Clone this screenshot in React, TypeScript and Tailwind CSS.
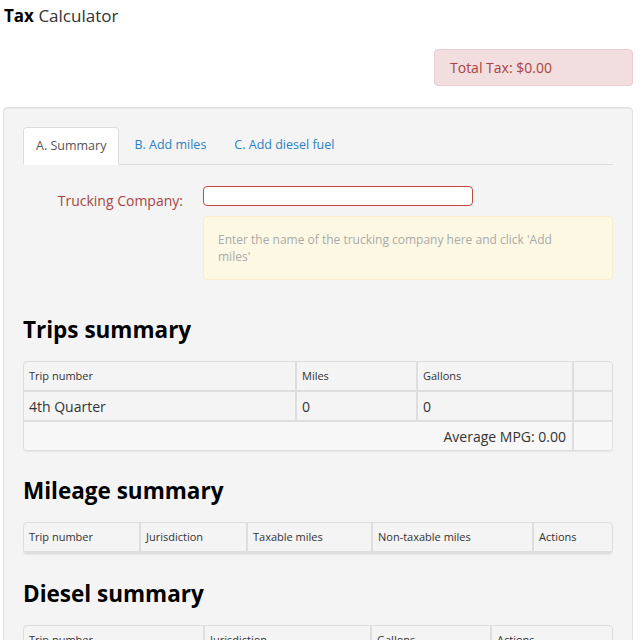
const trips = [{ trip: "4th Quarter", miles: "0", gallons: "0" }];

const HeaderCell = ({ children, last }: { children?: React.ReactNode; last?: boolean }) => (
  <div className={`flex h-[28px] items-center px-[5px] text-[11px] text-[#333] ${last ? "" : "border-r-2 border-[#dedede]"}`}>
    {children}
  </div>
);

const Cell = ({ children, last }: { children?: React.ReactNode; last?: boolean }) => (
  <div className={`flex h-[28px] items-center px-[5px] text-[14px] text-[#333] ${last ? "" : "border-r-2 border-[#dedede]"}`}>
    {children}
  </div>
);

const Heading = ({ children, top }: { children: React.ReactNode; top: string }) => (
  <h2 className={`${top} mb-[18px] text-[22.5px] font-bold leading-[26px] text-black`}>{children}</h2>
);

export default function App() {
  return (
    <div className="min-h-[640px] bg-white font-['Open_Sans',sans-serif] text-[#333]">
      <div className="pl-[4px] pt-[3px] text-[17px] leading-[26px]">
        <span className="font-bold text-black">Tax</span> <span className="text-[#333]">Calculator</span>
      </div>

      <div className="mr-[7px] mt-[20px] flex justify-end">
        <div className="flex h-[37px] w-[199px] items-center rounded-[4px] border border-[#ebccd1] bg-[#f2dede] px-[15px] text-[14px] text-[#a94442]">
          Total Tax: $0.00
        </div>
      </div>

      <div className="ml-[3px] mr-[7px] mt-[21px] rounded-[4px] border border-[#e3e3e3] bg-[#f4f4f4] px-[19px] pb-[20px] pt-[19px] shadow-[inset_0_1px_1px_rgba(0,0,0,0.05)]">
        {/* tabs */}
        <div className="flex border-b border-[#ddd] text-[12.5px]">
          <div className="-mb-px flex h-[38px] items-center rounded-t-[4px] border border-[#ddd] border-b-transparent bg-white px-[12px] text-[#555]">
            A. Summary
          </div>
          <div className="ml-[2px] flex h-[37px] items-center px-[13px] text-[#2a80c4]">B. Add miles</div>
          <div className="ml-[2px] flex h-[37px] items-center px-[13px] text-[#2a80c4]">C. Add diesel fuel</div>
        </div>

        {/* form */}
        <div className="mt-[21px] grid grid-cols-[160px_1fr] gap-x-[20px]">
          <label className="flex h-[20px] items-center justify-end pt-[8px] text-[14px] text-[#a94442]">
            Trucking Company:
          </label>
          <div>
            <input className="block h-[20px] w-[270px] rounded-[4px] border border-[#b94a48] bg-white outline-none" />
            <div className="mt-[10px] rounded-[4px] border border-[#faebcc] bg-[#fcf8e3] px-[14px] py-[14px] text-[12px] leading-[17px] text-[#aaa]">
              <p className="max-w-[345px]">Enter the name of the trucking company here and click 'Add miles'</p>
            </div>
          </div>
        </div>

        <Heading top="mt-[37px]">Trips summary</Heading>
        <div className="overflow-hidden rounded-[4px] border border-[#dedede] shadow-[0_1px_1px_rgba(0,0,0,0.06)]">
          <div className="grid grid-cols-[273px_121px_156px_1fr] border-b-2 border-[#dedede]">
            <HeaderCell>Trip number</HeaderCell>
            <HeaderCell>Miles</HeaderCell>
            <HeaderCell>Gallons</HeaderCell>
            <HeaderCell last />
          </div>
          {trips.map((t) => (
            <div key={t.trip} className="grid grid-cols-[273px_121px_156px_1fr] border-b-2 border-[#dedede]">
              <Cell>{t.trip}</Cell>
              <Cell>{t.miles}</Cell>
              <Cell>{t.gallons}</Cell>
              <Cell last />
            </div>
          ))}
          <div className="grid grid-cols-[1fr_38px] bg-[#f7f7f7]">
            <Cell>
              <span className="ml-auto pr-[1px]">Average MPG: 0.00</span>
            </Cell>
            <Cell last />
          </div>
        </div>

        <Heading top="mt-[27px]">Mileage summary</Heading>
        <div className="overflow-hidden rounded-[4px] border border-[#dedede] shadow-[0_1px_1px_rgba(0,0,0,0.06)]">
          <div className="grid grid-cols-[117px_107px_125px_161px_1fr] border-b-2 border-[#dedede]">
            <HeaderCell>Trip number</HeaderCell>
            <HeaderCell>Jurisdiction</HeaderCell>
            <HeaderCell>Taxable miles</HeaderCell>
            <HeaderCell>Non-taxable miles</HeaderCell>
            <HeaderCell last>Actions</HeaderCell>
          </div>
        </div>

        <Heading top="mt-[27px]">Diesel summary</Heading>
        <div className="overflow-hidden rounded-[4px] border border-[#dedede] shadow-[0_1px_1px_rgba(0,0,0,0.06)]">
          <div className="grid grid-cols-[181px_167px_120px_1fr] border-b-2 border-[#dedede]">
            <HeaderCell>Trip number</HeaderCell>
            <HeaderCell>Jurisdiction</HeaderCell>
            <HeaderCell>Gallons</HeaderCell>
            <HeaderCell last>Actions</HeaderCell>
          </div>
        </div>
      </div>
    </div>
  );
}
